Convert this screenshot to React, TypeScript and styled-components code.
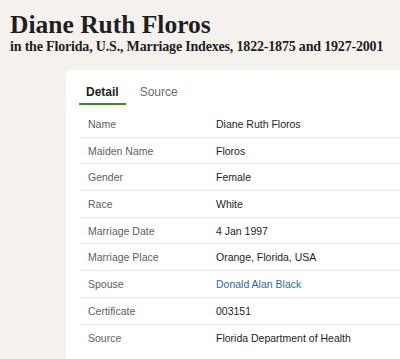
import React, { useState } from 'react';
import styled, { createGlobalStyle } from 'styled-components';

const GlobalStyle = createGlobalStyle`
  html, body {
    margin: 0;
    padding: 0;
    background: #f5f2ee;
    overflow: hidden;
  }
`;

interface Fact {
  label: string;
  value: string;
  link?: boolean;
}

const facts: Fact[] = [
  { label: 'Name', value: 'Diane Ruth Floros' },
  { label: 'Maiden Name', value: 'Floros' },
  { label: 'Gender', value: 'Female' },
  { label: 'Race', value: 'White' },
  { label: 'Marriage Date', value: '4 Jan 1997' },
  { label: 'Marriage Place', value: 'Orange, Florida, USA' },
  { label: 'Spouse', value: 'Donald Alan Black', link: true },
  { label: 'Certificate', value: '003151' },
  { label: 'Source', value: 'Florida Department of Health' },
];

const Page = styled.div`
  width: 400px;
  height: 359px;
  background: #f5f2ee;
  overflow: hidden;
`;

const Header = styled.header`
  padding: 12px 0 0 10px;
  font-family: 'Liberation Serif', 'DejaVu Serif', serif;
  color: #1e1e1e;
`;

const Title = styled.h1`
  margin: 0;
  font-size: 25.5px;
  line-height: 26px;
  font-weight: 700;
`;

const Subtitle = styled.h2`
  margin: 0;
  font-size: 14px;
  line-height: 18px;
  font-weight: 700;
  white-space: nowrap;
  letter-spacing: -0.18px;
`;

const Card = styled.section`
  margin: 14px -20px 0 66px;
  background: #fff;
  border-radius: 5px;
  padding: 11px 20px 0 13px;
  min-height: 320px;
`;

const Tabs = styled.nav`
  display: flex;
  gap: 7px;
  font-family: 'Liberation Sans', Arial, sans-serif;
  font-size: 12px;
  line-height: 14px;
`;

const Tab = styled.button<{ $active?: boolean }>`
  border: 0;
  background: none;
  padding: 4px 7px 4px;
  font: inherit;
  font-weight: ${(p) => (p.$active ? 700 : 400)};
  color: ${(p) => (p.$active ? '#1e1e1e' : '#6b6b6b')};
  border-bottom: 2px solid ${(p) => (p.$active ? '#3b8c1f' : 'transparent')};
  cursor: pointer;
`;

const Table = styled.dl`
  margin: 6px 0 0 1px;
  font-family: 'Liberation Sans', Arial, sans-serif;
  font-size: 10.5px;
`;

const Row = styled.div`
  display: grid;
  grid-template-columns: 128px 1fr;
  align-items: center;
  height: 26.7px;
  box-sizing: border-box;
  padding-left: 8px;
  border-bottom: 1px solid #ebe9e6;

  &:last-child {
    border-bottom: 0;
  }
`;

const Label = styled.dt`
  color: #5e5e5e;
`;

const Value = styled.dd<{ $link?: boolean }>`
  margin: 0;
  color: ${(p) => (p.$link ? '#1f6f94' : '#1e1e1e')};
`;

export default function App() {
  const [tab, setTab] = useState('detail');

  return (
    <Page>
      <GlobalStyle />
      <Header>
        <Title>Diane Ruth Floros</Title>
        <Subtitle>in the Florida, U.S., Marriage Indexes, 1822-1875 and 1927-2001</Subtitle>
      </Header>
      <Card>
        <Tabs>
          <Tab $active={tab === 'detail'} onClick={() => setTab('detail')}>Detail</Tab>
          <Tab $active={tab === 'source'} onClick={() => setTab('source')}>Source</Tab>
        </Tabs>
        <Table>
          {facts.map((f) => (
            <Row key={f.label}>
              <Label>{f.label}</Label>
              <Value $link={f.link}>{f.value}</Value>
            </Row>
          ))}
        </Table>
      </Card>
    </Page>
  );
}
